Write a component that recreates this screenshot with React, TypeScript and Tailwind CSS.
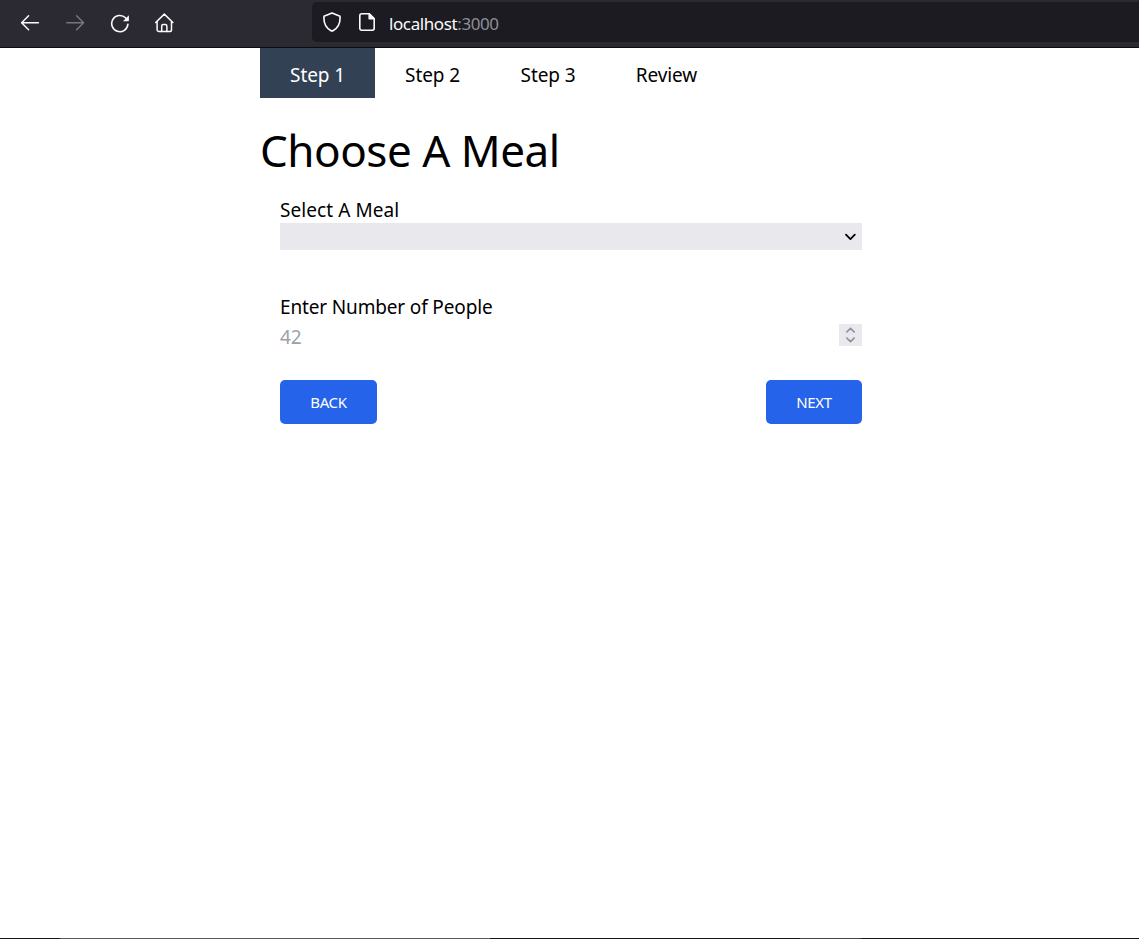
const steps = [
  { label: "Step 1", box: "w-[115px] bg-[#334155] text-white" },
  { label: "Step 2", box: "w-[115px]" },
  { label: "Step 3", box: "w-[116px]" },
  { label: "Review", box: "w-[121px]" },
];

function BrowserBar() {
  return (
    <header className="flex h-12 shrink-0 items-start border-b border-[#0c0c0d] bg-[#2b2a33] text-[#fbfbfe]">
      <div className="flex w-[312px] items-center pl-5 pt-[13px]">
        <svg className="h-5 w-5" viewBox="0 0 20 20" fill="none" stroke="currentColor" strokeWidth="1.5" strokeLinecap="round" strokeLinejoin="round">
          <path d="M18.4 9.8H1.8M8.6 2.8L1.6 9.8l7 7" />
        </svg>
        <svg className="ml-[25px] h-5 w-5 text-[#77767d]" viewBox="0 0 20 20" fill="none" stroke="currentColor" strokeWidth="1.5" strokeLinecap="round" strokeLinejoin="round">
          <path d="M1.8 9.8h16.6M11.6 2.8l7 7-7 7" />
        </svg>
        <svg className="ml-[25px] h-5 w-5" viewBox="0 0 20 20" fill="none" stroke="currentColor" strokeWidth="1.6" strokeLinecap="round">
          <path d="M17.9 11.2a8.1 8.1 0 1 1-2.4-6.4L17 6.3" />
          <path d="M18.9 2.3v5.2a.7.7 0 0 1-.7.7H13z" fill="currentColor" stroke="none" />
        </svg>
        <svg className="ml-6 h-5 w-5" viewBox="0 0 20 20" fill="none" stroke="currentColor" strokeWidth="1.5" strokeLinecap="round" strokeLinejoin="round">
          <path d="M1.7 9.5l8.6-8.4 8.6 8.4M3.1 8.3v8.4a1.9 1.9 0 0 0 1.9 1.9h10.6a1.9 1.9 0 0 0 1.9-1.9V8.3" />
          <path d="M7.7 18.4v-5.2a1.6 1.6 0 0 1 1.6-1.6h2a1.6 1.6 0 0 1 1.6 1.6v5.2" />
        </svg>
      </div>
      <div className="mt-[2px] flex h-10 flex-1 items-center rounded-l-[5px] bg-[#1c1b22] pl-[10px]">
        <svg className="h-5 w-5" viewBox="0 0 20 20" fill="none" stroke="currentColor" strokeWidth="1.6" strokeLinejoin="round">
          <path d="M10 .9L18 4.3c.5 5.9-1.7 11.2-6.7 14.2a2.5 2.5 0 0 1-2.6 0C3.7 15.5 1.5 10.2 2 4.3z" />
        </svg>
        <svg className="ml-[15px] h-5 w-5" viewBox="0 0 20 20" fill="none" stroke="currentColor" strokeWidth="1.6" strokeLinejoin="round">
          <path d="M4.7 1.8h7.5l5 5v9.5a1.9 1.9 0 0 1-1.9 1.9H4.7a1.9 1.9 0 0 1-1.9-1.9V3.7a1.9 1.9 0 0 1 1.9-1.9z" />
          <path d="M12.2 1.8v5h5z" fill="currentColor" />
        </svg>
        <span className="ml-3 pt-[3px] text-[17px] leading-5 tracking-[-0.4px]">
          localhost<span className="text-[#8f8f96]">:3000</span>
        </span>
      </div>
    </header>
  );
}

function MealForm() {
  return (
    <form className="flex flex-col px-5">
      <label htmlFor="meal" className="h-[25px] text-[19px] leading-[25px] tracking-[0.07px]">
        Select A Meal
      </label>
      <div className="grid h-[27px] items-center bg-[#e9e9ed]">
        <select id="meal" className="col-start-1 row-start-1 h-[27px] w-full appearance-none bg-transparent outline-none">
          <option value=""></option>
        </select>
        <svg className="pointer-events-none col-start-1 row-start-1 mr-[5px] h-3 w-3 justify-self-end" viewBox="0 0 12 12" fill="none" stroke="black" strokeWidth="1.8" strokeLinecap="round" strokeLinejoin="round">
          <path d="M1 3.7L5.4 8.1l4.4-4.4" />
        </svg>
      </div>
      <label htmlFor="people" className="mt-[45px] h-[25px] text-[19px] leading-[25px] tracking-[-0.15px]">
        Enter Number of People
      </label>
      <div className="mt-1 flex h-[22px] items-center">
        <input id="people" placeholder="42" className="h-[26px] min-w-0 flex-1 pt-1 text-[19px] leading-[22px] outline-none placeholder:text-[#9f9fa8]" />
        <div className="flex h-[22px] w-[23px] items-center justify-center bg-[#e9e9ed]">
          <svg className="h-[22px] w-[23px]" viewBox="0 0 23 22" fill="none" stroke="#8f8f9d" strokeWidth="1.7" strokeLinecap="round" strokeLinejoin="round">
            <path d="M7.8 8l3.7-3.7L15.2 8M7.8 14l3.7 3.7L15.2 14" />
          </svg>
        </div>
      </div>
      <div className="mt-[34px] flex h-11 justify-between text-[15px] text-white">
        <button type="button" className="w-[97px] rounded-[5px] bg-[#2563eb] tracking-[-0.3px]">BACK</button>
        <button type="button" className="w-24 rounded-[5px] bg-[#2563eb] tracking-[-0.3px]">NEXT</button>
      </div>
    </form>
  );
}

export default function App() {
  return (
    <div className="flex h-[939px] flex-col bg-white font-['Noto_Sans','Open_Sans',sans-serif] text-black">
      <BrowserBar />
      <main className="ml-[260px] w-[622px] flex-1">
        <nav className="flex h-[50px]">
          {steps.map((step) => (
            <div key={step.label} className={`flex items-center justify-center pt-[5px] text-[19px] tracking-[-0.1px] ${step.box}`}>
              {step.label}
            </div>
          ))}
        </nav>
        <h1 className="mt-[27px] h-[73px] text-[44px] leading-[50px] tracking-[-0.48px]">
          Choose A Meal
        </h1>
        <MealForm />
      </main>
      <footer className="flex h-px shrink-0 bg-[#1a181b]">
        <div className="ml-[60px] w-[430px] bg-[#5b5a5c]" />
        <div className="ml-[310px] w-[61px] bg-[#454446]" />
      </footer>
    </div>
  );
}
